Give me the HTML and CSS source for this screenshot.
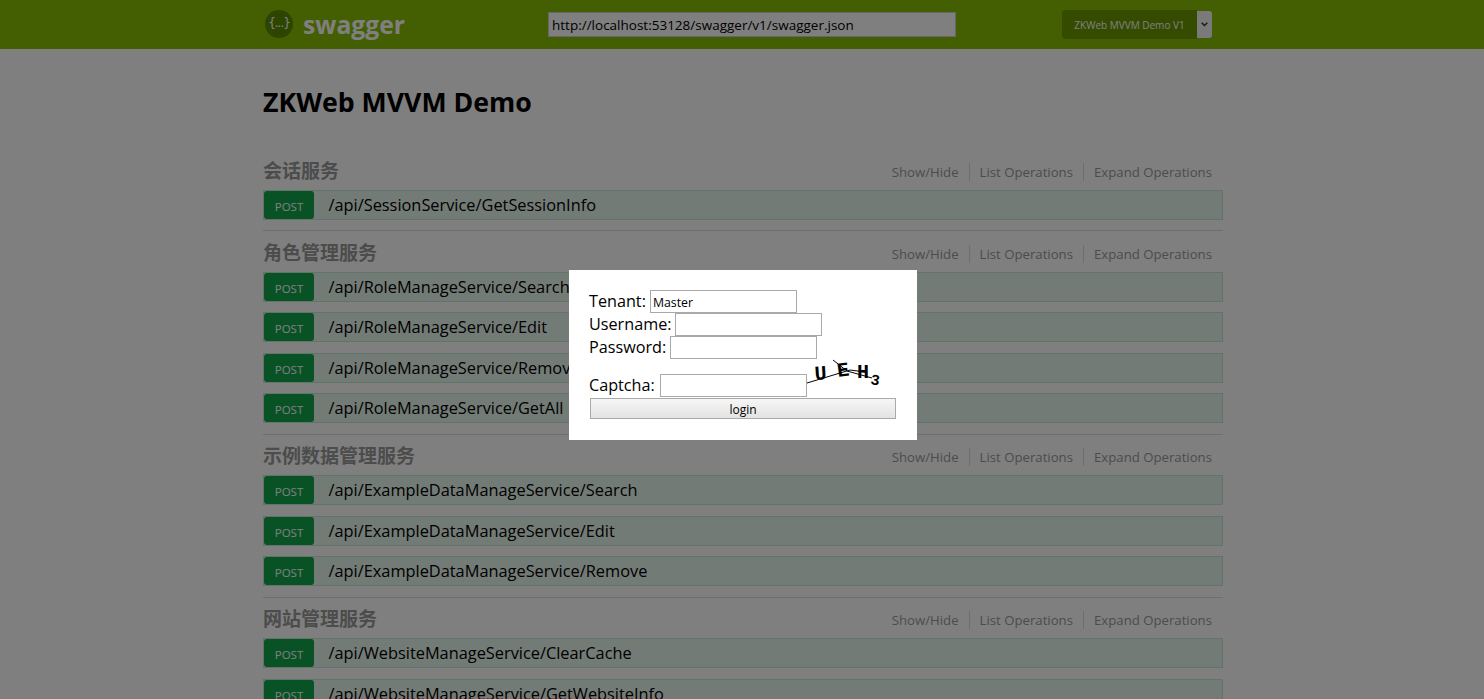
FILE: index.html
```html
<!DOCTYPE html>
<html lang="en">
<head>
  <meta charset="UTF-8">
  <title>ZKWeb MVVM Demo</title>
<link rel="stylesheet" href="styles.css">
</head>
<body>
  <header class="topbar">
    <div class="topbar-inner">
      <div class="logo">
        <span class="logo-mark">{...}</span>
        <span class="logo-text">swagger</span>
      </div>
      <input class="url-input" type="text" value="http://localhost:53128/swagger/v1/swagger.json">
      <div class="spec-select">
        <span class="spec-name">ZKWeb MVVM Demo V1</span>
        <span class="spec-arrow">
          <svg width="7" height="5" viewBox="0 0 7 5"><path d="M.7 .7L3.5 3.5 6.3 .7" fill="none" stroke="#333" stroke-width="1.5"/></svg>
        </span>
      </div>
    </div>
  </header>

  <main class="content">
    <h1 class="title">ZKWeb MVVM Demo</h1>

    <section class="resource">
      <div class="resource-head">
        <h2>会话服务</h2>
        <ul class="options"><li>Show/Hide</li><li>List Operations</li><li>Expand Operations</li></ul>
      </div>
      <div class="op"><span class="method">POST</span><span class="path">/api/SessionService/GetSessionInfo</span></div>
    </section>

    <section class="resource">
      <div class="resource-head">
        <h2>角色管理服务</h2>
        <ul class="options"><li>Show/Hide</li><li>List Operations</li><li>Expand Operations</li></ul>
      </div>
      <div class="op"><span class="method">POST</span><span class="path">/api/RoleManageService/Search</span></div>
      <div class="op"><span class="method">POST</span><span class="path">/api/RoleManageService/Edit</span></div>
      <div class="op"><span class="method">POST</span><span class="path">/api/RoleManageService/Remove</span></div>
      <div class="op"><span class="method">POST</span><span class="path">/api/RoleManageService/GetAll</span></div>
    </section>

    <section class="resource">
      <div class="resource-head">
        <h2>示例数据管理服务</h2>
        <ul class="options"><li>Show/Hide</li><li>List Operations</li><li>Expand Operations</li></ul>
      </div>
      <div class="op"><span class="method">POST</span><span class="path">/api/ExampleDataManageService/Search</span></div>
      <div class="op"><span class="method">POST</span><span class="path">/api/ExampleDataManageService/Edit</span></div>
      <div class="op"><span class="method">POST</span><span class="path">/api/ExampleDataManageService/Remove</span></div>
    </section>

    <section class="resource">
      <div class="resource-head">
        <h2>网站管理服务</h2>
        <ul class="options"><li>Show/Hide</li><li>List Operations</li><li>Expand Operations</li></ul>
      </div>
      <div class="op"><span class="method">POST</span><span class="path">/api/WebsiteManageService/ClearCache</span></div>
      <div class="op"><span class="method">POST</span><span class="path">/api/WebsiteManageService/GetWebsiteInfo</span></div>
    </section>
  </main>

  <div class="overlay">
    <form class="login-box">
      <div class="field"><label>Tenant:</label><input type="text" value="Master"></div>
      <div class="field"><label>Username:</label><input type="text"></div>
      <div class="field"><label>Password:</label><input type="password"></div>
      <div class="field captcha-field">
        <label>Captcha:</label><input type="text">
        <svg class="captcha" width="74" height="38" viewBox="0 0 74 38">
          <text x="8" y="21" transform="rotate(-4 8 21)">U</text>
          <text x="31" y="18" transform="rotate(-8 31 18)">E</text>
          <text x="50" y="19">H</text>
          <text class="small" x="63" y="25" transform="rotate(10 63 25)">3</text>
          <path d="M0 24L43 11 58 13 M26 1L40 12 65 19" fill="none" stroke="#000"/>
        </svg>
      </div>
      <button class="login-btn" type="button">login</button>
    </form>
  </div>
</body>
</html>
```

FILE: styles.css
```css
html, body {
  margin: 0;
  padding: 0;
  height: 100%;
  overflow: hidden;
  font-family: "Open Sans", "Noto Sans CJK SC", sans-serif;
  background: #fff;
  color: #000;
}

/* top bar */
.topbar {
  height: 49px;
  background: #89bf04;
}

.topbar-inner {
  width: 960px;
  margin-left: 263px;
  height: 100%;
  display: flex;
  align-items: center;
}

.logo {
  width: 285px;
  display: flex;
  align-items: center;
  gap: 10px;
  padding-left: 2px;
  box-sizing: border-box;
}

.logo-mark {
  width: 28px;
  height: 28px;
  margin-top: -1px;
  border-radius: 50%;
  background: #5a8a00;
  color: #fff;
  font-size: 12px;
  line-height: 26px;
  text-align: center;
  font-family: "DejaVu Sans", sans-serif;
  letter-spacing: -1px;
}

.logo-text {
  color: #fff;
  font-size: 24.7px;
  font-weight: 700;
  line-height: 28px;
}

.url-input {
  width: 408px;
  height: 25px;
  box-sizing: border-box;
  border: 1px solid #ccc;
  padding: 0 3px;
  font: 13.5px "Open Sans", sans-serif;
  color: #000;
  background: #fff;
}

.spec-select {
  margin-left: 106px;
  display: flex;
  height: 29px;
}

.spec-name {
  width: 135px;
  background: #689600;
  color: #fff;
  font-size: 10px;
  line-height: 31px;
  text-align: center;
  border-radius: 4px 0 0 4px;
}

.spec-arrow {
  width: 15px;
  margin: 1px 0;
  background: #f4f4f4;
  border-radius: 0 3px 3px 0;
  display: flex;
  align-items: center;
  justify-content: center;
}

/* operations list */
.content {
  width: 960px;
  margin-left: 263px;
}

.title {
  margin: 0;
  height: 100.4px;
  box-sizing: border-box;
  padding-top: 35px;
  font-size: 26.7px;
  line-height: 36px;
  font-weight: 700;
}

.resource {
  border-bottom: 1px solid #ddd;
}

.resource-head {
  height: 40.5px;
  display: flex;
  justify-content: space-between;
  align-items: flex-end;
  padding-bottom: 5px;
  box-sizing: border-box;
}

.resource-head h2 {
  margin: 0;
  font-size: 19px;
  line-height: 28px;
  color: #999;
  font-weight: 700;
}

.options {
  list-style: none;
  margin: 0 11px 4px 0;
  padding: 0;
  display: flex;
  font-size: 13.2px;
  line-height: 18px;
  color: #999;
}

.options li {
  padding: 0 10px;
  border-right: 1px solid #ddd;
}

.options li:last-child {
  padding-right: 0;
  border-right: none;
}

.op {
  height: 30px;
  margin-bottom: 10.5px;
  box-sizing: border-box;
  display: flex;
  align-items: center;
  background: #e7f6ec;
  border: 1px solid #c3e8d1;
}

.method {
  width: 50px;
  height: 28px;
  background: #10a54a;
  color: #fff;
  font-size: 11.5px;
  line-height: 31px;
  text-align: center;
  border-radius: 3px;
}

.path {
  margin-left: 14.5px;
  font-size: 16.35px;
  line-height: 28px;
}

/* login dialog */
.overlay {
  position: fixed;
  inset: 0;
  padding-left: 2px;
  background: rgba(0, 0, 0, 0.5);
  display: flex;
  align-items: flex-start;
  justify-content: center;
}

.login-box {
  width: 348px;
  height: 170px;
  margin-top: 270px;
  padding: 20px;
  box-sizing: border-box;
  background: #fff;
  font-size: 16.2px;
}

.field {
  display: flex;
  align-items: center;
  gap: 4px;
  height: 23px;
}

.field label {
  line-height: 23px;
}

.field input {
  width: 147px;
  height: 23px;
  box-sizing: border-box;
  border: 1px solid #aaa;
  padding: 1px 2px 0;
  font: 12.3px "Open Sans", sans-serif;
  color: #000;
  background: #fff;
}

.captcha-field {
  height: 38px;
  align-items: flex-end;
  gap: 0;
}

.captcha-field label {
  margin-right: 5px;
}

.captcha text {
  font: 700 20px "Liberation Mono", monospace;
  fill: #000;
}

.captcha text.small {
  font-size: 15px;
}

.login-btn {
  display: block;
  width: 306px;
  height: 21px;
  margin: 1px 0 0 1px;
  padding: 1px 0 0;
  border: 1px solid #aaa;
  background: linear-gradient(#f6f6f6, #e3e3e3);
  font: 12px "Open Sans", sans-serif;
  color: #000;
}
```
